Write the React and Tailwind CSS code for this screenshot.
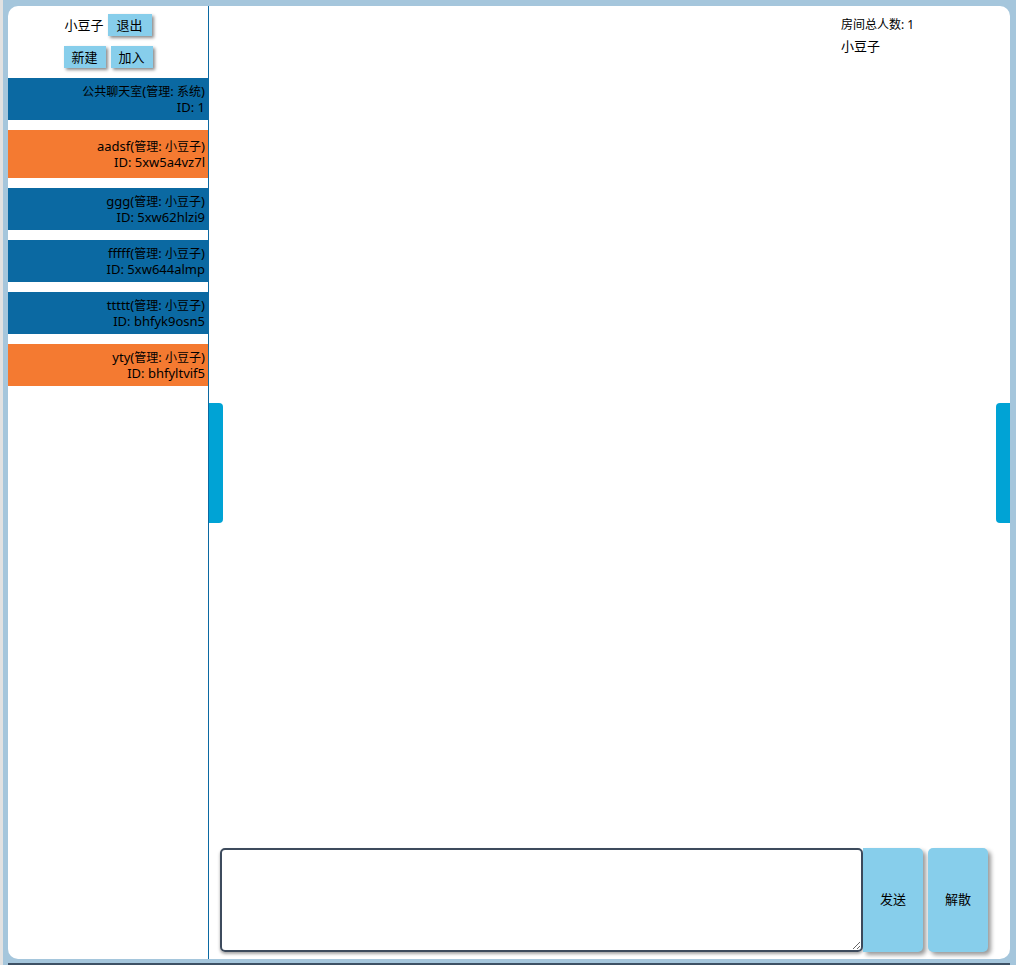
import React from "react";

const rooms = [
  { name: "公共聊天室(管理: 系统)", id: "ID: 1", color: "bg-[#0b69a2]", py: "pt-[4px] pb-[6px]" },
  { name: "aadsf(管理: 小豆子)", id: "ID: 5xw5a4vz7l", color: "bg-[#f47a31]", py: "pt-[7px] pb-[9px]" },
  { name: "ggg(管理: 小豆子)", id: "ID: 5xw62hlzi9", color: "bg-[#0b69a2]", py: "pt-[4px] pb-[6px]" },
  { name: "fffff(管理: 小豆子)", id: "ID: 5xw644almp", color: "bg-[#0b69a2]", py: "pt-[4px] pb-[6px]" },
  { name: "ttttt(管理: 小豆子)", id: "ID: bhfyk9osn5", color: "bg-[#0b69a2]", py: "pt-[4px] pb-[6px]" },
  { name: "yty(管理: 小豆子)", id: "ID: bhfyltvif5", color: "bg-[#f47a31]", py: "pt-[4px] pb-[6px]" },
];

// Latin runs at 13px, CJK runs at 12px (matches the reference's mixed font metrics)
function Mixed({ text }) {
  const parts = text.split(/([\u4e00-\u9fff]+)/).filter(Boolean);
  return (
    <>
      {parts.map((p, i) =>
        /[\u4e00-\u9fff]/.test(p) ? (
          <span key={i} className="text-[12px]">{p}</span>
        ) : (
          <span key={i} className="text-[13px]">{p}</span>
        )
      )}
    </>
  );
}

const btn =
  "bg-[#87ceeb] h-[22px] text-[13px] leading-[22px] text-black shadow-[2px_2px_3px_rgba(0,0,0,0.45)]";

export default function App() {
  return (
    <div className="w-[1021px] h-[965px] flex overflow-hidden font-['Noto_Sans','Noto_Sans_CJK_SC',sans-serif] text-black">
      <div className="w-[3px] h-full bg-[#e2e2e2]" />
      <div className="flex-1 bg-[#a5c6dc] flex flex-col pl-[5px] pr-[6px] pt-[6px]">
        <div className="h-[953px] bg-white rounded-[10px] flex overflow-hidden">
          {/* Sidebar */}
          <div className="w-[201px] h-full border-r border-[#0b69a2] flex flex-col">
            <div className="flex justify-center items-center gap-[4px] mt-[8px]">
              <span className="text-[13px] leading-[22px]">小豆子</span>
              <button className={`${btn} w-[44px]`}>退出</button>
            </div>
            <div className="flex justify-center items-center gap-[5px] mt-[10px]">
              <button className={`${btn} w-[42px]`}>新建</button>
              <button className={`${btn} w-[42px]`}>加入</button>
            </div>
            <div className="flex flex-col gap-[10px] mt-[10px]">
              {rooms.map((r) => (
                <div key={r.id} className={`${r.color} ${r.py} pr-[3px] text-right leading-[16px]`}>
                  <div className="h-[16px]"><Mixed text={r.name} /></div>
                  <div className="h-[16px]"><Mixed text={r.id} /></div>
                </div>
              ))}
            </div>
          </div>
          {/* Main */}
          <div className="flex-1 relative flex flex-col">
            <div className="flex justify-end">
              <div className="w-[169px] pt-[10px]">
                <div className="h-[18px] leading-[18px] text-[12px]">房间总人数: 1</div>
                <div className="text-[13px] leading-[18px] mt-[3px]">小豆子</div>
              </div>
            </div>
            <div className="flex-1" />
            <div className="flex items-stretch pl-[11px] pr-[22px] pb-[7px] h-[111px]">
              <textarea className="flex-1 h-[104px] border-2 border-[#3d4b5d] rounded-[5px] shadow-[0_2px_3px_rgba(0,0,0,0.35)] outline-none" />
              <button className="w-[60px] h-[104px] bg-[#87ceeb] rounded-r-[5px] text-[13px] shadow-[3px_3px_4px_rgba(0,0,0,0.4)]">发送</button>
              <button className="w-[60px] h-[104px] ml-[5px] bg-[#87ceeb] rounded-[5px] text-[13px] shadow-[3px_3px_4px_rgba(0,0,0,0.4)]">解散</button>
            </div>
            <div className="absolute left-0 top-[397px] w-[14px] h-[120px] bg-[#00a3d5] rounded-r-[4px]" />
            <div className="absolute right-0 top-[397px] w-[14px] h-[120px] bg-[#00a3d5] rounded-l-[4px]" />
          </div>
        </div>
        <div className="h-[4px]" />
        <div className="h-[2px] bg-[#3e5165]" />
      </div>
      <div className="w-[5px] h-full bg-white" />
    </div>
  );
}
